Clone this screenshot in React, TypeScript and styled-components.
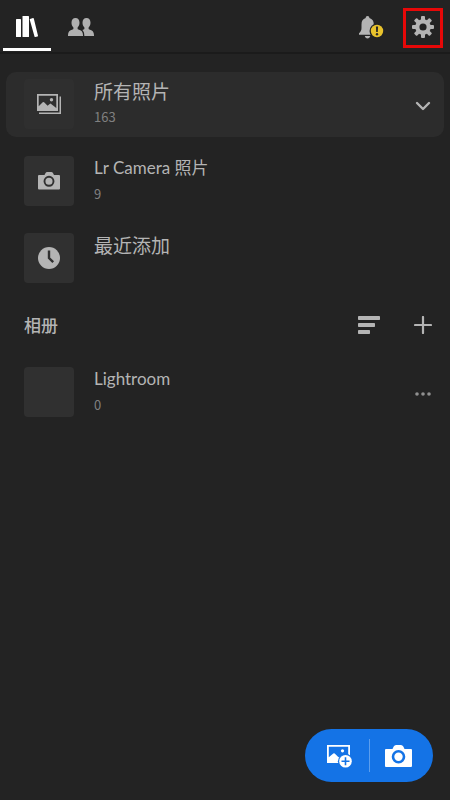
import React from "react";
import styled, { createGlobalStyle } from "styled-components";

const GlobalStyle = createGlobalStyle`
  *, *::before, *::after { box-sizing: border-box; }
  body {
    margin: 0;
    background: #232323;
    color: #b4b4b4;
    font-family: "Noto Sans CJK SC", "Noto Sans", sans-serif;
  }
  h2, h3, p, ul { margin: 0; padding: 0; }
  button { font: inherit; }
`;

const Page = styled.div`
  min-height: 100vh;
  display: flex;
  flex-direction: column;
`;

const TopBar = styled.header`
  display: flex;
  justify-content: space-between;
  height: 54px;
  padding: 0 7px 0 3px;
  border-bottom: 2px solid #1b1b1b;
`;

const TabList = styled.nav`
  display: flex;
  gap: 6px;
`;

const IconButton = styled.button`
  display: flex;
  align-items: center;
  justify-content: center;
  width: 40px;
  height: 40px;
  padding: 0;
  border: 0;
  background: none;
  color: #b4b4b4;
  cursor: pointer;
  svg { display: block; flex: none; }
`;

const Tab = styled(IconButton)<{ $active?: boolean }>`
  width: 48px;
  height: 51px;
  padding-top: 6px;
  color: ${(p) => (p.$active ? "#ffffff" : "#b0b0b0")};
  border-bottom: 3px solid ${(p) => (p.$active ? "#ffffff" : "transparent")};
`;

const TopActions = styled.div`
  display: flex;
  gap: 12px;
  padding-top: 8px;
`;

const TopButton = styled(IconButton)<{ $highlighted?: boolean }>`
  padding-bottom: 2px;
  border: ${(p) => (p.$highlighted ? "3px solid #e60808" : "0")};
`;

const Content = styled.main`
  flex: 1;
  padding: 18px 6px 0;
`;

const List = styled.ul`
  display: grid;
  gap: 12px;
  list-style: none;
`;

const Row = styled.li<{ $selected?: boolean }>`
  display: flex;
  align-items: flex-start;
  height: 65px;
  padding: 7px 1px 5px 18px;
  border-radius: 10px;
  background: ${(p) => (p.$selected ? "#2c2c2c" : "transparent")};
`;

const Thumb = styled.div<{ $subtle?: boolean }>`
  display: flex;
  align-items: center;
  justify-content: center;
  flex: none;
  width: 50px;
  height: 50px;
  margin-right: 20px;
  border-radius: 4px;
  background: ${(p) => (p.$subtle ? "#2f2f2f" : "#303030")};
`;

const RowText = styled.div`
  flex: 1;
  min-width: 0;
`;

const Title = styled.h3`
  font-size: 19px;
  font-weight: 400;
  line-height: 24px;
`;

const LatinTitle = styled(Title)`
  font-family: Lato, "Noto Sans CJK SC", sans-serif;
  font-size: 17px;
`;

const Count = styled.p`
  color: #808080;
  font-size: 13px;
  line-height: 28px;
`;

const RowAction = styled(IconButton)`
  align-self: center;
`;

const MoreButton = styled(RowAction)`
  color: #909090;
`;

const SectionHead = styled.div`
  display: flex;
  align-items: center;
  height: 68px;
  margin-bottom: 1px;
  padding: 0 1px 0 18px;
`;

const SectionTitle = styled.h2`
  flex: 1;
  font-size: 17px;
  font-weight: 500;
  line-height: 26px;
`;

const SectionActions = styled.div`
  display: flex;
  gap: 14px;
`;

const Capture = styled.div`
  position: fixed;
  right: 17px;
  bottom: 18px;
  display: flex;
  align-items: center;
  width: 128px;
  height: 53px;
  padding: 0 6px;
  border-radius: 27px;
  background: #1473e6;
`;

const CaptureButton = styled(IconButton)`
  flex: 1;
  height: 53px;
  color: #ffffff;
`;

const Divider = styled.span`
  width: 1px;
  height: 33px;
  background: #5b9eee;
`;

const svgProps = (w: number, h: number) => ({
  width: w,
  height: h,
  viewBox: `0 0 ${w} ${h}`,
  fill: "currentColor",
  "aria-hidden": true,
});

const BooksIcon = () => (
  <svg {...svgProps(24, 22)}>
    <rect x="1" y="3" width="5" height="18" rx="0.6" />
    <rect x="7.500" y="0" width="6.500" height="21" rx="0.6" />
    <path d="M15 2.900 18 2.100Q18.600 2 18.800 2.600L23 19.800Q23.100 20.400 22.500 20.600L20.300 21.100Q19.700 21.200 19.500 20.600L14.700 3.500Q14.600 3 15 2.900Z" />
  </svg>
);

const personPath =
  "M7.500 0C10 0 11.500 2 11.500 4.800 11.500 6.700 10.700 8.500 9.600 9.500V10.700Q9.600 11.400 10.400 11.600C13.300 12.300 15 14 15 17V18H0V17C0 14 1.700 12.300 4.600 11.600Q5.400 11.400 5.400 10.700V9.500C4.300 8.500 3.500 6.700 3.500 4.800 3.500 2 5 0 7.500 0Z";

const PeopleIcon = () => (
  <svg {...svgProps(26, 18)}>
    <path d={personPath} transform="translate(11 0)" />
    <path d={personPath} stroke="#232323" strokeWidth="2.600" />
    <path d={personPath} />
  </svg>
);

const BellIcon = () => (
  <svg {...svgProps(26, 24)}>
    <path d="M9.500 1c1.200 0 1.900.8 1.900 2 3 1 4.400 3 4.400 6.400v3.500c0 2.700.9 3.800 2.500 5.300v1.600H1v-1.600c1.600-1.500 2.500-2.600 2.500-5.300V9.400C3.500 6 4.800 4 7.700 3 7.700 1.800 8.300 1 9.500 1Z" />
    <path d="M6.800 21h5.400c-.3 1.600-1.300 2.500-2.700 2.500S7.100 22.600 6.800 21Z" />
    <circle cx="19" cy="16" r="7.500" fill="#232323" />
    <circle cx="19" cy="16" r="6.200" fill="#e8c22c" />
    <path d="M17.900 11.500h2.200l-.3 5.500h-1.600Z" fill="#282828" />
    <circle cx="19" cy="19.200" r="1.200" fill="#282828" />
  </svg>
);

const GearIcon = () => (
  <svg {...svgProps(22, 22)}>
    <mask id="gear-hole">
      <rect width="22" height="22" fill="#fff" />
      <circle cx="11" cy="11" r="3.600" fill="#000" />
    </mask>
    <g mask="url(#gear-hole)">
      {[0, 45, 90, 135].map((angle) => (
        <rect key={angle} x="9" y="0" width="4" height="22" rx="1" transform={`rotate(${angle} 11 11)`} />
      ))}
      <circle cx="11" cy="11" r="7.800" />
    </g>
  </svg>
);

const PhotosIcon = () => (
  <svg {...svgProps(26, 22)}>
    <path fillRule="evenodd" d="M1 1h21v17H1Zm1.700 1.700v10.600l4-4q.7-.7 1.400 0l3.500 3.500 2.100-1.900q.7-.6 1.400 0l5.200 4.200V2.700Z" />
    <circle cx="15.500" cy="6.700" r="1.700" />
    <path d="M23.500 3.500H25V21H3v-1.500h20.500Z" />
  </svg>
);

const ClockIcon = () => (
  <svg {...svgProps(22, 22)}>
    <circle cx="11" cy="11" r="11" />
    <path d="M11 3.500V11l4.200 4.200" fill="none" stroke="#303030" strokeWidth="2.400" />
  </svg>
);

const ChevronIcon = () => (
  <svg {...svgProps(16, 10)}>
    <path d="m2 2 6 6 6-6" fill="none" stroke="currentColor" strokeWidth="2.400" strokeLinecap="round" strokeLinejoin="round" />
  </svg>
);

const SortIcon = () => (
  <svg {...svgProps(22, 18)}>
    <rect x="0" y="0" width="22" height="4" rx="0.700" />
    <rect x="0" y="7" width="17" height="4" rx="0.700" />
    <rect x="0" y="14" width="12" height="4" rx="0.700" />
  </svg>
);

const PlusIcon = () => (
  <svg {...svgProps(18, 18)}>
    <path d="M9 1v16M1 9h16" fill="none" stroke="currentColor" strokeWidth="2.200" strokeLinecap="round" />
  </svg>
);

const MoreIcon = () => (
  <svg {...svgProps(16, 4)}>
    <circle cx="2" cy="2" r="1.800" />
    <circle cx="8" cy="2" r="1.800" />
    <circle cx="14" cy="2" r="1.800" />
  </svg>
);

const AddPhotoIcon = () => (
  <svg {...svgProps(26, 24)}>
    <path fillRule="evenodd" d="M0 1h23v18H0Zm1.800 1.800v10.500l4.500-3.800q.7-.6 1.400 0l3.300 3.300q.8.800 1.700.1L15 11h6.200V2.800Z" />
    <circle cx="15.500" cy="6.800" r="1.600" />
    <circle cx="18.500" cy="17.300" r="7.600" fill="#1473e6" />
    <circle cx="18.500" cy="17.300" r="6.300" />
    <path d="M18.500 13.300v8M14.500 17.300h8" fill="none" stroke="#1473e6" strokeWidth="1.600" />
  </svg>
);

const SmallCameraIcon = () => (
  <svg {...svgProps(22, 18)}>
    <path d="M1 3h5.500l.9-1.800Q8 0 9.300 0h3.900q1.300 0 1.900 1.200L16 3h5q1 0 1 1v12.500q0 1-1 1H1q-1 0-1-1V4q0-1 1-1Z" />
    <circle cx="11" cy="9.300" r="4.500" fill="none" stroke="#303030" strokeWidth="1.900" />
  </svg>
);

const LargeCameraIcon = () => (
  <svg {...svgProps(27, 22)}>
    <path d="M1 4h6.500l1.200-2.500Q9.500 0 11 0h5q1.500 0 2.300 1.500L19.500 4H26q1 0 1 1v16q0 1-1 1H1q-1 0-1-1V5q0-1 1-1Z" />
    <circle cx="13.500" cy="11.800" r="5.500" fill="none" stroke="#1473e6" strokeWidth="2.600" />
  </svg>
);

export default function App() {
  return (
    <Page>
      <GlobalStyle />
      <TopBar>
        <TabList>
          <Tab $active aria-label="图库" aria-current="page"><BooksIcon /></Tab>
          <Tab aria-label="共享"><PeopleIcon /></Tab>
        </TabList>
        <TopActions>
          <TopButton aria-label="通知"><BellIcon /></TopButton>
          <TopButton $highlighted aria-label="设置"><GearIcon /></TopButton>
        </TopActions>
      </TopBar>
      <Content>
        <List>
          <Row $selected>
            <Thumb $subtle><PhotosIcon /></Thumb>
            <RowText>
              <Title>所有照片</Title>
              <Count>163</Count>
            </RowText>
            <RowAction aria-label="展开"><ChevronIcon /></RowAction>
          </Row>
          <Row>
            <Thumb><SmallCameraIcon /></Thumb>
            <RowText>
              <LatinTitle>Lr Camera 照片</LatinTitle>
              <Count>9</Count>
            </RowText>
          </Row>
          <Row>
            <Thumb><ClockIcon /></Thumb>
            <RowText>
              <Title>最近添加</Title>
            </RowText>
          </Row>
        </List>
        <SectionHead>
          <SectionTitle>相册</SectionTitle>
          <SectionActions>
            <IconButton aria-label="排序"><SortIcon /></IconButton>
            <IconButton aria-label="新建相册"><PlusIcon /></IconButton>
          </SectionActions>
        </SectionHead>
        <List>
          <Row>
            <Thumb />
            <RowText>
              <LatinTitle>Lightroom</LatinTitle>
              <Count>0</Count>
            </RowText>
            <MoreButton aria-label="更多"><MoreIcon /></MoreButton>
          </Row>
        </List>
      </Content>
      <Capture>
        <CaptureButton aria-label="添加照片"><AddPhotoIcon /></CaptureButton>
        <Divider />
        <CaptureButton aria-label="相机"><LargeCameraIcon /></CaptureButton>
      </Capture>
    </Page>
  );
}
